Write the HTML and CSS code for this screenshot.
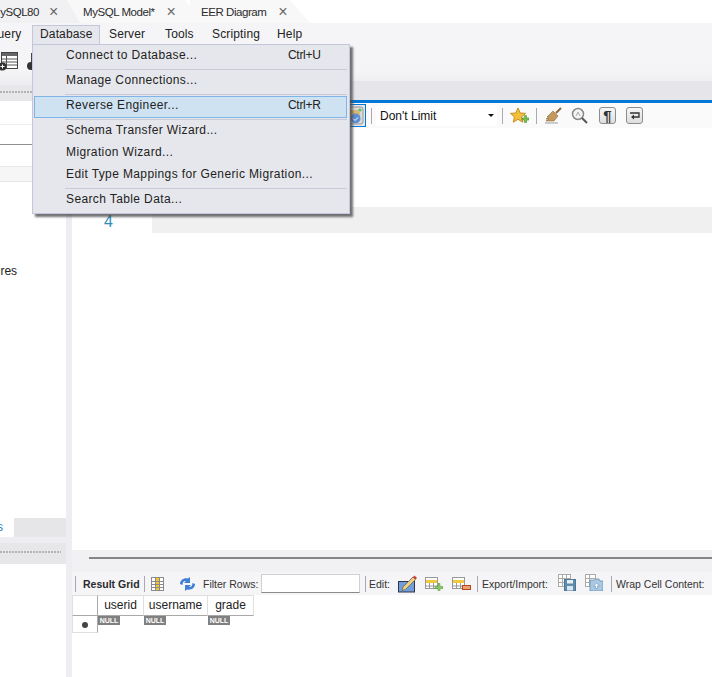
FILE: index.html
```html
<!DOCTYPE html>
<html lang="en">
<head>
<meta charset="utf-8">
<title>MySQL Workbench</title>
<link rel="stylesheet" href="styles.css">
</head>
<body>
<div class="app">
  <div class="tabs">
    <div class="tab tab-a"><span>MySQL80</span><i>×</i></div>
    <div class="tab tab-b"><span>MySQL Model*</span><i>×</i></div>
    <div class="tab tab-c"><span>EER Diagram</span><i>×</i></div>
  </div>
  <div class="menubar">
    <span class="m m-query">Query</span>
    <span class="m m-db">Database</span>
    <span class="m m-server">Server</span>
    <span class="m m-tools">Tools</span>
    <span class="m m-script">Scripting</span>
    <span class="m m-help">Help</span>
  </div>
  <div class="toolbar">
    <svg class="tb-ic1" width="20" height="20" viewBox="0 0 20 20"><rect x="2.500" y="1.500" width="16" height="16" fill="#fff" stroke="#444"/><rect x="3" y="2" width="15" height="3" fill="#666"/><path d="M7.500 5v12M3 8h15M3 11h15M3 14h15" stroke="#555"/><circle cx="3.500" cy="15.500" r="4" fill="#333"/><path d="M1.500 15.500h4M3.500 13.500v4" stroke="#fff"/></svg>
    <svg class="tb-ic2" width="10" height="20" viewBox="0 0 10 20"><rect x="4.500" y="2.500" width="6" height="13" fill="#fff" stroke="#444"/><circle cx="4" cy="15" r="4" fill="#333"/></svg>
  </div>
  <div class="main">
    <aside class="side">
      <div class="pane-head"><div class="dots"></div></div>
      <div class="side-body">
        <div class="side-search"></div>
        <div class="side-filter"></div>
        <div class="side-strip"></div>
        <div class="side-item">Stored Procedures</div>
      </div>
      <div class="side-tabs"><span class="side-tab">Schemas</span></div>
      <div class="pane-head pane-head-low"><div class="dots"></div></div>
      <div class="side-info"></div>
    </aside>
    <section class="center">
      <div class="editor-tabs"></div>
      <div class="editor-bar">
        <span class="tool-toggle">
          <svg width="19" height="19" viewBox="0 0 19 19"><rect x="1" y="1" width="17" height="17" rx="2" fill="#d9d9d9" stroke="#999"/><path d="M4 4h9l2 3v3H4z" fill="#d8b873"/><circle cx="15" cy="4" r="1.500" fill="#5cc05c"/><circle cx="10.500" cy="12.500" r="5" fill="#5b8fd8"/><path d="M8 12.500l2 2 3-3" fill="none" stroke="#fff"/></svg>
        </span>
        <span class="sep sep-limit"></span>
        <span class="limit"><span>Don't Limit</span><b></b></span>
        <span class="sep sep-star"></span>
        <svg class="ic-star" width="19" height="18" viewBox="0 0 19 18"><path d="M8 1l2.200 5 5.300.4-4 3.500 1.300 5.300L8 12.300 3.200 15.200l1.300-5.300-4-3.500L5.800 6z" fill="#f2c13c" stroke="#c98d1c"/><path d="M12 11h2.500V8.500h2V11H19v2h-2.500v2.500h-2V13H12z" fill="#7dc04f" stroke="#4c8f2d" stroke-width=".6"/></svg>
        <span class="sep sep-broom"></span>
        <svg class="ic-broom" width="18" height="18" viewBox="0 0 18 18"><path d="M17 1l-5 5" stroke="#8a6a3a" stroke-width="2"/><path d="M9 4l5 5-4 5-8 0 3-2-3 0 3-2-2 0z" fill="#c39a5b" stroke="#8f6d3c" stroke-width=".6"/><path d="M1 16h13" stroke="#ccc" stroke-width="2"/></svg>
        <svg class="ic-find" width="17" height="17" viewBox="0 0 17 17"><circle cx="7" cy="7" r="5.500" fill="#f4f4f4" stroke="#888" stroke-width="1.500"/><path d="M5 9l2-4 2 4" fill="none" stroke="#aaa"/><path d="M11 11l5 5" stroke="#555" stroke-width="2"/></svg>
        <span class="btn-box btn-para">¶</span>
        <span class="btn-box btn-wrap">
          <svg width="12" height="10" viewBox="0 0 12 10"><path d="M1 2h9v4H4" fill="none" stroke="#333" stroke-width="1.300"/><path d="M5 3.500L2 6l3 2.500z" fill="#333"/></svg>
        </span>
      </div>
      <div class="editor">
        <div class="code-line"><span class="ln">4</span><span class="cur"></span></div>
      </div>
      <div class="splitter"><div class="split-line"></div></div>
      <div class="result-bar">
        <span class="sep s1"></span>
        <strong class="rg">Result Grid</strong>
        <span class="sep s2"></span>
        <svg class="r-grid" width="13" height="14" viewBox="0 0 13 14"><rect x=".5" y=".5" width="12" height="13" fill="#fff" stroke="#8a8a8a"/><rect x="5" y="1" width="3.500" height="12" fill="#f4c430"/><path d="M1 4.500h11M1 7.500h11M1 10.500h11M4.500 1v12M8.500 1v12" stroke="#8a8a8a"/></svg>
        <svg class="r-refresh" width="17" height="14" viewBox="0 0 17 14"><path d="M1 7c0-4 4-6.500 8-5.500l2-1.500v6H5l2-2C5 3.500 3.500 5 3.500 8z" fill="#3f7fd6"/><path d="M16 7c0 4-4 6.500-8 5.500L6 14V8h6l-2 2c2 .5 3.500-1 3.500-4z" fill="#3f7fd6"/></svg>
        <span class="lbl l-filter">Filter Rows:</span>
        <span class="filter-input"></span>
        <span class="sep s3"></span>
        <span class="lbl l-edit">Edit:</span>
        <svg class="r-edit" width="19" height="18" viewBox="0 0 19 18"><rect x=".5" y="6.500" width="16" height="10.500" fill="#6f9fdc" stroke="#334"/><path d="M5 12L15 2l2.500 2.500L7.500 14.500l-3.500 1z" fill="#f0d080" stroke="#776"/><path d="M15 2l1.500-1.500L19 3l-1.500 1.500z" fill="#d23c3c"/></svg>
        <svg class="r-add" width="18" height="14" viewBox="0 0 18 14"><rect x=".5" y=".5" width="12" height="11" fill="#fff" stroke="#999"/><rect x="1" y="3" width="11" height="3" fill="#f2c93c"/><path d="M1 9h11M4.500 6v6M8.500 6v6" stroke="#999"/><path d="M10 9.500h3v-3h2v3h3v2h-3v3h-2v-3h-3z" fill="#8ccb6a" stroke="#4c8f2d" stroke-width=".5"/></svg>
        <svg class="r-del" width="19" height="14" viewBox="0 0 19 14"><rect x=".5" y=".5" width="12" height="11" fill="#fff" stroke="#999"/><rect x="1" y="3" width="11" height="3" fill="#f2c93c"/><path d="M1 9h11M4.500 6v6M8.500 6v6" stroke="#999"/><rect x="10.500" y="8.500" width="8" height="4" fill="#f0a070" stroke="#b04a1c"/></svg>
        <span class="sep s4"></span>
        <span class="lbl l-export">Export/Import:</span>
        <svg class="r-exp" width="18" height="17" viewBox="0 0 18 17"><rect x=".5" y=".5" width="12" height="12" fill="#fff" stroke="#aaa"/><path d="M1 4.500h11M1 8.500h11M4.500 1v11M8.500 1v11" stroke="#aaa"/><rect x="6.500" y="5.500" width="11" height="11" fill="#5f8bad" stroke="#4d7799"/><rect x="9" y="6" width="6" height="3.500" fill="#e8f0f6"/><rect x="9" y="12" width="6" height="4.500" fill="#dbe6ee"/></svg>
        <svg class="r-imp" width="18" height="17" viewBox="0 0 18 17"><rect x=".5" y=".5" width="10" height="12" fill="#fff" stroke="#aaa"/><path d="M1 4.500h9M1 8.500h9M4.500 1v11" stroke="#aaa"/><path d="M5 6h5l1-1h3l1 2h3v10H5z" fill="#a8c8e4" stroke="#5d86a8" stroke-width=".7"/><path d="M11.500 9l3 3h-2v2.500h-2V12h-2z" fill="#f0f6fb" stroke="#5d86a8" stroke-width=".5"/></svg>
        <span class="sep s5"></span>
        <span class="lbl l-wrap">Wrap Cell Content:</span>
      </div>
      <div class="grid-area">
        <div class="rgrid">
          <div class="h corner"></div>
          <div class="h">userid</div>
          <div class="h">username</div>
          <div class="h">grade</div>
          <div class="rowhead"><span class="star"></span></div>
          <div class="c"><span class="null">NULL</span></div>
          <div class="c"><span class="null">NULL</span></div>
          <div class="c"><span class="null">NULL</span></div>
        </div>
      </div>
    </section>
  </div>
  <div class="menu">
    <div class="mi"><span>Connect to Database...</span><kbd>Ctrl+U</kbd></div>
    <div class="msep"></div>
    <div class="mi"><span>Manage Connections...</span></div>
    <div class="msep"></div>
    <div class="mi mi-active"><span>Reverse Engineer...</span><kbd>Ctrl+R</kbd></div>
    <div class="msep"></div>
    <div class="mi"><span>Schema Transfer Wizard...</span></div>
    <div class="mi"><span>Migration Wizard...</span></div>
    <div class="mi"><span>Edit Type Mappings for Generic Migration...</span></div>
    <div class="msep"></div>
    <div class="mi"><span>Search Table Data...</span></div>
  </div>
</div>
</body>
</html>
```

FILE: styles.css
```css
* { box-sizing: border-box; }
html, body { margin: 0; padding: 0; background: #fff; }
.app {
  position: relative;
  width: 712px;
  height: 677px;
  overflow: hidden;
  display: flex;
  flex-direction: column;
  font-family: "Liberation Sans", Arial, sans-serif;
  font-size: 12px;
  color: #1e1e1e;
}

/* document tabs */
.tabs { height: 23px; display: flex; flex: none; background: #fff; }
.tab {
  height: 23px;
  padding-top: 1px;
  display: flex;
  flex: none;
  align-items: center;
  background: #f8f8f9;
  white-space: nowrap;
  font-size: 11.500px;
  letter-spacing: -.45px;
  color: #2b2b2b;
}
.tab i { font-style: normal; font-size: 16px; letter-spacing: 0; color: #6a6a6a; }
.tab-a { width: 89px; margin-left: -9px; z-index: 2; background: #f1f1f4; clip-path: polygon(0 0, 76px 0, 100% 100%, 0 100%); }
.tab-a i { margin-left: 10px; }
.tab-b { width: 133px; margin-left: -13px; z-index: 1; clip-path: polygon(0 0, 118px 0, 100% 100%, 0 100%); padding-left: 16px; }
.tab-b i { margin-left: 12px; }
.tab-c { width: 122px; margin-left: -12px; clip-path: polygon(2px 0, 102px 0, 100% 100%, 0 100%); padding-left: 13px; }
.tab-c i { margin-left: 12px; }

/* menu bar */
.menubar {
  height: 21px;
  flex: none;
  display: flex;
  align-items: center;
  background: #f5f5f7;
  font-size: 12px;
  letter-spacing: .15px;
  color: #222;
}
.m { display: block; white-space: nowrap; }
.m-query { margin-left: -12px; width: 44px; }
.m-db {
  width: 68px;
  height: 20px;
  margin-top: 2px;
  padding: 0 0 0 7px;
  line-height: 17px;
  background: #e6e7ec;
  border: 1px solid #c4c7dc;
  border-bottom: none;
}
.m-server { margin-left: 9px; width: 56px; }
.m-tools { width: 47px; }
.m-script { width: 65px; }

/* main toolbar */
.toolbar {
  height: 37px;
  flex: none;
  background: linear-gradient(#f5f5f7 70%, #efeff1);
  display: flex;
  align-items: flex-start;
  padding-top: 7px;
}
.tb-ic1 { margin-left: -1px; }
.tb-ic2 { margin-left: 8px; }

/* layout */
.main { flex: 1; display: flex; min-height: 0; background: #eeeef2; }
.side { width: 66px; flex: none; display: flex; flex-direction: column; background: #eeeef2; padding-top: 4px; }
.pane-head { height: 16px; flex: none; background: #e7e7ea; display: flex; align-items: center; padding-bottom: 2px; }
.dots {
  width: 61px;
  height: 3px;
  background-image: radial-gradient(circle at 1px 1px, #b4b4b4 .8px, transparent 1px);
  background-size: 3px 3px;
}
.side-body { flex: 1; background: #fff; display: flex; flex-direction: column; }
.side-search { height: 24px; flex: none; border-bottom: 1px solid #ececec; }
.side-filter { height: 20px; flex: none; border-bottom: 1px solid #8f8f8f; }
.side-strip { height: 16px; flex: none; margin-top: 21px; background: #f6f6f6; border: solid #e8e8e8; border-width: 1px 0; }
.side-item { margin-top: 82px; margin-left: -83px; white-space: nowrap; font-size: 12px; color: #222; }
.side-tabs { height: 19px; flex: none; background: #e6e6e9; display: flex; overflow: hidden; }
.side-tab { display: block; width: 14px; background: #fff; color: #1a7fc7; overflow: hidden; white-space: nowrap; line-height: 19px; font-size: 12px; text-indent: -47px; }
.pane-head-low { margin-top: 6px; height: 21px; }
.side-info { height: 113px; flex: none; background: #fff; }

.center { flex: 1; min-width: 0; margin-left: 6px; display: flex; flex-direction: column; background: #fff; }
.editor-tabs { height: 19px; flex: none; background: #e6e6ea; }
.editor-bar {
  height: 28px;
  flex: none;
  border-top: 3px solid #0078d7;
  background: #fafafb;
  display: flex;
  align-items: center;
  font-size: 12px;
}
.sep { display: block; width: 1px; height: 16px; background: #a9a9b2; flex: none; }
.tool-toggle {
  display: flex;
  align-items: center;
  justify-content: center;
  width: 24px;
  height: 23px;
  margin-left: 270px;
  border: 1px solid #0078d7;
  background: #e6e6e6;
}
.sep-limit { margin-left: 5px; }
.limit {
  width: 121px;
  height: 21px;
  margin-left: 4px;
  padding-left: 4px;
  background: #fff;
  display: flex;
  align-items: center;
  justify-content: space-between;
  color: #111;
}
.limit b { width: 0; height: 0; margin-right: 3px; border: solid transparent; border-width: 3px 3px 0; border-top-color: #111; }
.sep-star { margin-left: 5px; }
.ic-star { margin-left: 7px; }
.sep-broom { margin-left: 7px; }
.ic-broom { margin-left: 7px; }
.ic-find { margin-left: 9px; }
.btn-box {
  display: flex;
  align-items: center;
  justify-content: center;
  width: 17px;
  height: 17px;
  border: 1px solid #8d8d8d;
  border-radius: 3px;
  background: linear-gradient(#f7f7f7, #dedede);
  flex: none;
}
.btn-para { margin-left: 11px; font-size: 15px; font-weight: 700; color: #333; }
.btn-wrap { margin-left: 10px; }

.editor { flex: 1; min-height: 0; background: #fff; padding-top: 79px; }
.code-line { height: 26px; display: flex; }
.ln {
  width: 43px;
  margin-left: 32px;
  font-size: 16px;
  line-height: 29px;
  color: #2f8cb4;
}
.cur { flex: 1; margin-left: 5px; background: #f0f0f0; }

.splitter { height: 22px; flex: none; background: #f1f1f3; padding: 7px 0 0 17px; }
.split-line { height: 2px; background: #858585; }

.result-bar {
  height: 23px;
  flex: none;
  display: flex;
  align-items: center;
  background: #f5f5f7;
  font-size: 10.500px;
  white-space: nowrap;
  color: #333;
}
.s1 { margin-left: 3px; }
.rg { margin-left: 7px; width: 54px; font-size: 10.500px; color: #2a2a2a; }
.s2 { margin-left: 7px; }
.r-grid { margin-left: 6px; }
.r-refresh { margin-left: 15px; }
.lbl { display: block; flex: none; }
.l-filter { margin-left: 7px; width: 53px; }
.filter-input { display: block; width: 99px; height: 19px; margin-left: 5px; background: #fff; border: 1px solid #d0d0d0; border-bottom: 1px solid #8a8a8a; }
.s3 { margin-left: 5px; }
.l-edit { margin-left: 3px; width: 22px; }
.r-edit { margin-left: 7px; }
.r-add { margin-left: 8px; }
.r-del { margin-left: 9px; }
.s4 { margin-left: 6px; }
.l-export { margin-left: 4px; width: 68px; }
.r-exp { margin-left: 8px; margin-top: -2px; }
.r-imp { margin-left: 9px; margin-top: -2px; }
.s5 { margin-left: 8px; }
.l-wrap { margin-left: 4px; }

.grid-area { height: 82px; flex: none; background: #fff; }
.rgrid { display: grid; grid-template-columns: 26px 46px 64px 46px; grid-template-rows: 21px 17px; width: 182px; font-size: 12px; color: #222; }
.h { border: solid #dfdfdf; border-width: 1px 1px 1px 0; border-bottom-color: #a9a9a9; display: flex; align-items: center; justify-content: center; padding-bottom: 1px; }
.h.corner { border-left: 1px solid #dfdfdf; border-right-color: #a9a9a9; }
.rowhead { border: solid #dfdfdf; border-width: 0 1px 1px 1px; border-right-color: #a9a9a9; display: flex; align-items: center; justify-content: center; padding-top: 2px; }
.star { width: 6px; height: 6px; border-radius: 50%; background: #444; }
.null {
  display: block;
  width: 22px;
  height: 9px;
  line-height: 9px;
  background: #808080;
  color: #fff;
  font-size: 7px;
  font-weight: 700;
  text-align: center;
}

/* dropdown */
.menu {
  position: absolute;
  left: 32px;
  top: 44px;
  width: 318px;
  height: 170px;
  padding: 1px 2px 0 1px;
  background: #e6e7ec;
  border: 1px solid #c4c7dc;
  box-shadow: 3px 3px 2px rgba(70, 70, 70, .75);
  font-size: 12px;
  letter-spacing: .38px;
  color: #222;
  z-index: 5;
}
.mi {
  position: relative;
  height: 22px;
  display: flex;
  align-items: center;
  padding: 0 0 5px 32px;
  white-space: nowrap;
}
.mi-active { background: #cfe2f2; outline: 1px solid #7fb4e6; outline-offset: -1px; }
.mi kbd { position: absolute; left: 254px; font: inherit; letter-spacing: -.3px; }
.msep { height: 1px; margin: 1px 0 1px 31px; background: #c8cad8; }
```
